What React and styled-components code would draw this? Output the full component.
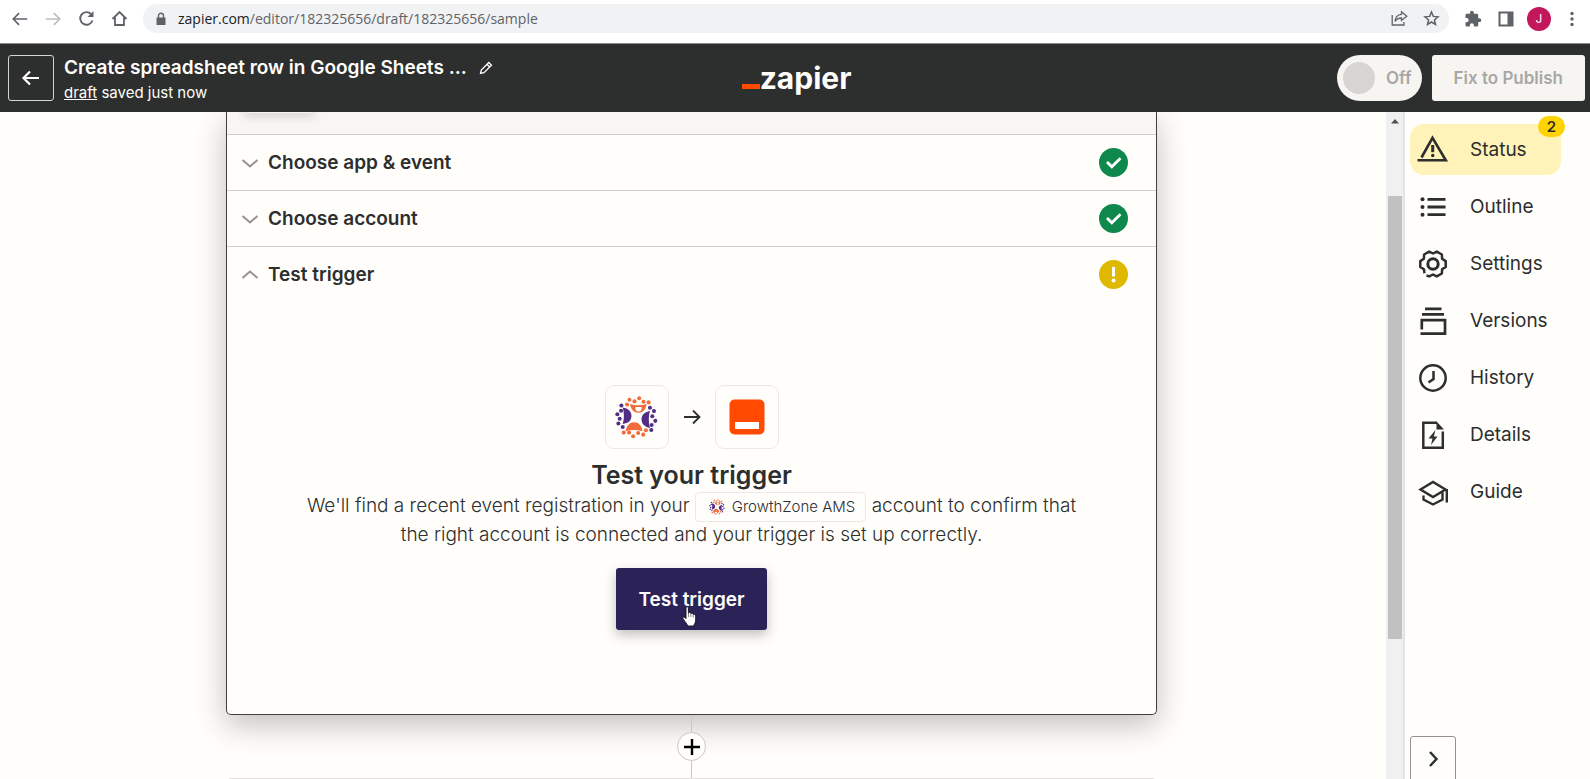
import styled, { createGlobalStyle, css } from "styled-components";

const steps = [
  { label: "Choose app & event", state: "done" },
  { label: "Choose account", state: "done" },
  { label: "Test trigger", state: "warning", open: true },
];

const navItems = [
  { label: "Status", icon: "status", active: true, count: 2 },
  { label: "Outline", icon: "outline" },
  { label: "Settings", icon: "settings" },
  { label: "Versions", icon: "versions" },
  { label: "History", icon: "history" },
  { label: "Details", icon: "details" },
  { label: "Guide", icon: "guide" },
];

const navIcons = {
  status: (
    <>
      <path d="M4.500 23.500 15.500 3.800 28.800 26.300H0.500" strokeWidth="2.600" />
      <path d="M15.700 11v7.200" strokeWidth="3" />
      <circle cx="15.700" cy="21.500" r="1.700" fill="currentColor" stroke="none" />
    </>
  ),
  outline: (
    <>
      <path d="M10.500 8.300h18M10.500 16h18M10.500 23.700h18" strokeWidth="2.800" />
      <g fill="currentColor" stroke="none">
        <circle cx="5.500" cy="8.300" r="2" />
        <circle cx="5.500" cy="16" r="2" />
        <circle cx="5.500" cy="23.700" r="2" />
      </g>
    </>
  ),
  settings: (
    <>
      <path
        d="M7.500 25.300 6.900 21.300 3.300 18.900V13.100L6.900 10.700 7.100 6.500 12.200 3.600 16 5.500 19.800 3.600 24.900 6.500 25.100 10.700 28.700 13.100V18.900L25.100 21.300 24.900 25.500 19.800 28.400 16 26.500 12.200 28.400 9.500 27.500"
        strokeLinejoin="round"
      />
      <circle cx="16" cy="16" r="5.200" strokeWidth="3" />
    </>
  ),
  versions: (
    <path d="M8 3.800h16.500M5 9.300h22M4.800 24.500V15.200H28V28.700H3.500" strokeWidth="2.700" />
  ),
  history: (
    <>
      <circle cx="16" cy="16" r="12.700" />
      <path d="M16.500 9v8L11.500 20.500" />
    </>
  ),
  details: (
    <>
      <path d="M20 3.700H6.300V28.700H25.800V12.500" />
      <path d="M19.500 2.500 27 10.500H19.500Z" fill="currentColor" stroke="none" />
      <path d="M18.500 11 11.500 19.500H15.500L14 26 20.500 17.500H16.800Z" fill="currentColor" stroke="none" />
    </>
  ),
  guide: (
    <path
      d="M3.500 13.500 16 6 28.500 13.500 16 21ZM6.500 19.500V23.500L16 28.500 25.500 23.500V16.500M29.800 13v13.500"
      strokeWidth="2.400"
    />
  ),
};

const NavIcon = ({ name }) => (
  <svg width="32" height="32" viewBox="0 0 32 32" fill="none" stroke="currentColor" strokeWidth="2.500" aria-hidden="true">
    {navIcons[name]}
  </svg>
);

const Arrow = ({ size = 20, flip, weight = 1.8 }) => (
  <svg width={size} height={size} viewBox="0 0 20 20" fill="none" stroke="currentColor" strokeWidth={weight} aria-hidden="true">
    <path d={flip ? "M2 10H17M11 3.500 17.500 10 11 16.500" : "M18 10H3M9 3.500 2.500 10 9 16.500"} />
  </svg>
);

const Chevron = ({ open }) => (
  <svg width="18" height="18" viewBox="0 0 18 18" fill="none" stroke="#95928e" strokeWidth="2" aria-hidden="true">
    <path d={open ? "M1.500 12 9 5.500 16.500 12" : "M1.500 6 9 12.500 16.500 6"} />
  </svg>
);

const StepState = ({ state }) => (
  <svg width="29" height="29" viewBox="0 0 29 29" role="img" aria-label={state}>
    <circle cx="14.500" cy="14.500" r="14.500" fill={state === "done" ? "#0f884e" : "#dfb900"} />
    {state === "done" ? (
      <path d="M8 14 12.800 18.800 21.500 10.300" fill="none" stroke="#fff" strokeWidth="2.800" />
    ) : (
      <>
        <path d="M14.500 7v9.500" stroke="#fff" strokeWidth="3" />
        <circle cx="14.500" cy="20.500" r="2" fill="#fff" />
      </>
    )}
  </svg>
);

const GrowthZoneLogo = ({ size }) => (
  <svg width={size} height={size} viewBox="108 80 128 128" aria-hidden="true">
    <g fill="#512d84">
      <path d="M131 114C149 116 157 128 157 139 157 152 149 162 131 163Q138 139 131 114Z" />
      <path d="M212 125Q205 150 212 175C195 172 187 162 187 150 187 138 195 128 212 125Z" />
      <circle cx="127" cy="108" r="6" />
      <circle cx="126" cy="124" r="6" />
      <circle cx="115" cy="134" r="6" />
      <circle cx="122" cy="148" r="6" />
      <circle cx="118" cy="162" r="6" />
      <circle cx="131" cy="172" r="6" />
      <circle cx="212" cy="115" r="6" />
      <circle cx="224" cy="125" r="6" />
      <circle cx="219" cy="140" r="6" />
      <circle cx="228" cy="154" r="6" />
      <circle cx="217" cy="166" r="6" />
      <circle cx="216" cy="181" r="6" />
    </g>
    <g fill="#f26b3a">
      <path d="M153 104Q178 111 202 104C200 120 190 130 178 130 165 130 155 120 153 104Z" />
      <path d="M140 185C142 168 152 158 165 158 178 158 188 168 190 185Q165 178 140 185Z" />
      <circle cx="144" cy="105" r="6" />
      <circle cx="151" cy="91" r="6" />
      <circle cx="166" cy="96" r="6" />
      <circle cx="180" cy="87" r="6" />
      <circle cx="193" cy="97" r="6" />
      <circle cx="208" cy="99" r="6" />
      <circle cx="134" cy="189" r="6" />
      <circle cx="150" cy="189" r="6" />
      <circle cx="162" cy="200" r="6" />
      <circle cx="177" cy="190" r="6" />
      <circle cx="192" cy="195" r="6" />
      <circle cx="200" cy="182" r="6" />
    </g>
    <path d="M169 113h18v5a9 8 0 0 1-18 0Z" fill="#fff" />
  </svg>
);

const ZapierAppLogo = () => (
  <svg width="36" height="36" viewBox="0 0 36 36" aria-hidden="true">
    <rect x="0.500" y="0.500" width="35" height="35" rx="5" fill="#ff4a00" />
    <path d="M6 23h24v7H6Z" fill="#fff" />
  </svg>
);

const BrowserBar = () => (
  <Toolbar>
    <IconButton aria-label="Back">
      <Arrow size={18} />
    </IconButton>
    <IconButton aria-label="Forward" disabled>
      <Arrow size={18} flip />
    </IconButton>
    <IconButton aria-label="Reload">
      <svg width="17" height="17" viewBox="0 0 17 17" fill="none" stroke="currentColor" strokeWidth="1.900">
        <path d="M14.500 10.500A6.300 6.300 0 1 1 13.300 4.300" />
        <path d="M15.500 1v6H9.500Z" fill="currentColor" stroke="none" />
      </svg>
    </IconButton>
    <IconButton aria-label="Home">
      <svg width="17" height="17" viewBox="0 0 17 17" fill="none" stroke="currentColor" strokeWidth="1.800">
        <path d="M1.500 9 8.500 2 15.500 9M4 7.500V15H13V7.500" />
      </svg>
    </IconButton>
    <AddressBar>
      <svg width="10" height="14" viewBox="0 0 10 14" aria-hidden="true">
        <path d="M0.500 5.500h9V13h-9Z" fill="#5f6368" />
        <path d="M2.500 6V3.700a2.500 2.500 0 0 1 5 0V6" fill="none" stroke="#5f6368" strokeWidth="1.400" />
      </svg>
      <label htmlFor="url">zapier.com</label>
      <input id="url" type="text" defaultValue="/editor/182325656/draft/182325656/sample" />
      <IconButton aria-label="Share">
        <svg width="17" height="17" viewBox="0 0 17 17" fill="none" stroke="currentColor" strokeWidth="1.300">
          <path d="M1.200 5V15H13V12" />
          <path d="M10.500 1.800 15.800 6.200 10.500 10.500V8C7.500 8 5.500 9 4 11.500 4.300 7.500 6.800 4.600 10.500 4.300Z" />
        </svg>
      </IconButton>
      <IconButton aria-label="Bookmark">
        <svg width="17" height="17" viewBox="0 0 17 17" fill="none" stroke="currentColor" strokeWidth="1.500">
          <path d="M8.500 2 10.300 6.400 15 6.800 11.400 9.900 12.500 14.500 8.500 12 4.500 14.500 5.600 9.900 2 6.800 6.700 6.400Z" />
        </svg>
      </IconButton>
    </AddressBar>
    <IconButton aria-label="Extensions">
      <svg width="18" height="18" viewBox="0 0 24 24" fill="currentColor">
        <path d="M20.500 11H19V7c0-1.100-.9-2-2-2h-4V3.500a2.500 2.500 0 0 0-5 0V5H4c-1.100 0-2 .9-2 2v3.800h1.500a2.700 2.700 0 0 1 0 5.400H2V20c0 1.100.9 2 2 2h3.800v-1.500a2.700 2.700 0 0 1 5.400 0V22H17c1.100 0 2-.9 2-2v-4h1.500a2.500 2.500 0 0 0 0-5z" />
      </svg>
    </IconButton>
    <IconButton aria-label="Side panel">
      <svg width="16" height="16" viewBox="0 0 16 16">
        <path d="M0.500 0.500h15v15h-15Z M2.500 2.500v11h7v-11Z" fill="currentColor" fillRule="evenodd" />
      </svg>
    </IconButton>
    <Avatar aria-label="Profile">J</Avatar>
    <IconButton aria-label="Menu">
      <svg width="16" height="16" viewBox="0 0 16 16" fill="currentColor">
        <circle cx="8" cy="2.500" r="1.700" />
        <circle cx="8" cy="8" r="1.700" />
        <circle cx="8" cy="13.500" r="1.700" />
      </svg>
    </IconButton>
  </Toolbar>
);

const EditorHeader = () => (
  <Header>
    <HeaderSide>
      <BackButton aria-label="Back to Zaps">
        <Arrow size={20} weight={2.2} />
      </BackButton>
      <ZapInfo>
        <ZapTitle>
          Create spreadsheet row in Google Sheets ...
          <EditButton aria-label="Rename">
            <svg width="14" height="14" viewBox="0 0 14 14" fill="none" stroke="currentColor" strokeWidth="1.300">
              <path d="M1.500 12.500 2.300 9 9.800 1.500 12.500 4.200 5 11.700ZM8 3.300 10.700 6" />
            </svg>
          </EditButton>
        </ZapTitle>
        <SavedNote>
          <a href="#draft">draft</a> saved just now
        </SavedNote>
      </ZapInfo>
    </HeaderSide>
    <Brand href="#home">
      <i />
      zapier
    </Brand>
    <HeaderSide $end>
      <Toggle>
        <input type="checkbox" role="switch" disabled />
        Off
      </Toggle>
      <PublishButton disabled>Fix to Publish</PublishButton>
    </HeaderSide>
  </Header>
);

const TestTrigger = () => (
  <TestPanel>
    <AppPair>
      <AppTile>
        <GrowthZoneLogo size={43} />
      </AppTile>
      <Arrow size={20} flip />
      <AppTile>
        <ZapierAppLogo />
      </AppTile>
    </AppPair>
    <h2>Test your trigger</h2>
    <p>
      We'll find a recent event registration in your{" "}
      <AppChip>
        <GrowthZoneLogo size={16} />
        GrowthZone AMS
      </AppChip>{" "}
      account to confirm that the right account is connected and your trigger is
      set up correctly.
    </p>
    <TestButton>
      Test trigger
      <Pointer width="15" height="21" viewBox="0 0 15 21" aria-hidden="true">
        <path
          d="M4 1.800C4 0.300 6.400 0.300 6.400 1.800V7C7 6.200 8.800 6.400 8.900 7.600 9.600 7 11.200 7.200 11.300 8.500 12.300 8 13.700 8.400 13.700 10V14C13.700 17 12 18 11.700 20H5.700C5 17.500 3 16 1 12.500 0.500 11.300 2 10.500 3 11.500L4 12.700Z"
          fill="#fff"
          stroke="#111"
          strokeWidth="0.900"
        />
        <path d="M6.500 7v4M8.900 8v3M11.300 9v2.500" stroke="#555" strokeWidth="0.700" />
      </Pointer>
    </TestButton>
  </TestPanel>
);

const App = () => {
  return (
    <Page>
      <GlobalStyle />
      <BrowserBar />
      <EditorHeader />
      <Body>
        <Canvas>
          <StepCard>
            <CardTop>
              <span />
            </CardTop>
            {steps.map((step) => (
              <StepRow key={step.label} aria-expanded={Boolean(step.open)}>
                <Chevron open={step.open} />
                <span>{step.label}</span>
                <StepState state={step.state} />
              </StepRow>
            ))}
            <TestTrigger />
          </StepCard>
          <Connector />
          <AddButton aria-label="Add step">
            <svg width="18" height="18" viewBox="0 0 18 18" stroke="#000" strokeWidth="2.400">
              <path d="M9 1v16M1 9h16" />
            </svg>
          </AddButton>
          <Connector />
          <NextCard />
        </Canvas>
        <ScrollTrack>
          <svg width="10" height="6" viewBox="0 0 10 6" aria-hidden="true">
            <path d="M1 5.500 5 1 9 5.500Z" fill="#505050" />
          </svg>
          <ScrollThumb />
        </ScrollTrack>
        <Sidebar>
          {navItems.map((item) => (
            <NavItem key={item.label} $active={item.active}>
              <NavIcon name={item.icon} />
              {item.label}
              {item.count && <Badge>{item.count}</Badge>}
            </NavItem>
          ))}
          <CollapseButton aria-label="Collapse">
            <svg width="18" height="18" viewBox="0 0 18 18" fill="none" stroke="#2d2e2e" strokeWidth="2.400">
              <path d="M6 2 12.500 9 6 16" />
            </svg>
          </CollapseButton>
        </Sidebar>
      </Body>
    </Page>
  );
};

export default App;

const GlobalStyle = createGlobalStyle`
  * {
    box-sizing: border-box;
  }
  body {
    margin: 0;
    font-family: Inter, "Liberation Sans", sans-serif;
    color: #2d2e2e;
    background: #fffefb;
  }
  button,
  input {
    font: inherit;
    color: inherit;
    margin: 0;
  }
  svg {
    flex: none;
    display: block;
  }
`;

const Page = styled.div`
  height: 100vh;
  display: flex;
  flex-direction: column;
  overflow: hidden;
`;

const Toolbar = styled.div`
  flex: none;
  display: flex;
  align-items: center;
  gap: 1px;
  padding: 4px 2px 10px 4px;
  background: #fff;
  border-bottom: 1px solid #8b8b8b;
`;

const IconButton = styled.button`
  width: 32px;
  height: 29px;
  flex: none;
  display: flex;
  align-items: center;
  justify-content: center;
  padding: 0;
  border: none;
  background: none;
  color: #5f6368;

  &:disabled {
    color: #bcbec0;
  }
`;

const AddressBar = styled.div`
  flex: 1;
  display: flex;
  align-items: center;
  height: 29px;
  margin: 0 7px;
  padding: 0 2px 0 13px;
  border-radius: 15px;
  background: #f0f2f4;
  font-family: "Open Sans", "Noto Sans", sans-serif;
  font-size: 14px;
  color: #5f6368;

  label {
    margin-left: 12px;
    color: #202124;
  }
  input {
    flex: 1;
    padding: 0;
    border: none;
    outline: none;
    background: none;
  }
`;

const Avatar = styled.button`
  width: 24px;
  height: 24px;
  flex: none;
  margin: 0 4px;
  padding: 0;
  border: none;
  border-radius: 50%;
  background: #c2185b;
  color: #fff;
  font-size: 12px;
`;

const Header = styled.header`
  flex: none;
  display: flex;
  align-items: center;
  height: 68px;
  padding: 0 5px 0 8px;
  background: #2d2e2e;
  color: #fffefb;
`;

const HeaderSide = styled.div`
  flex: 1;
  display: flex;
  align-items: center;
  gap: 10px;
  justify-content: ${({ $end }) => ($end ? "flex-end" : "flex-start")};
`;

const BackButton = styled.button`
  width: 46px;
  height: 46px;
  flex: none;
  display: flex;
  align-items: center;
  justify-content: center;
  padding: 0;
  border: 1px solid #d7d5d2;
  border-radius: 3px;
  background: none;
`;

const ZapInfo = styled.div`
  padding-top: 4px;
`;

const ZapTitle = styled.h1`
  display: flex;
  align-items: center;
  margin: 0;
  font-size: 19px;
  font-weight: 600;
  line-height: 26px;
  white-space: nowrap;
`;

const EditButton = styled.button`
  margin-left: 12px;
  padding: 0;
  border: none;
  background: none;
`;

const SavedNote = styled.div`
  font-size: 15px;
  line-height: 24px;

  a {
    color: inherit;
  }
`;

const Brand = styled.a`
  display: flex;
  align-items: baseline;
  color: #fffefb;
  font-size: 30px;
  font-weight: 700;
  line-height: 40px;
  text-decoration: none;

  i {
    width: 18px;
    height: 5px;
    background: #ff4a00;
  }
`;

const disabledControl = css`
  height: 46px;
  background: #f7f5f2;
  color: #a8a7a5;
  font-size: 17px;
  font-weight: 600;
`;

const Toggle = styled.label`
  ${disabledControl}
  display: flex;
  align-items: center;
  gap: 11px;
  padding: 0 10px 0 6px;
  border-radius: 23px;

  input {
    appearance: none;
    width: 32px;
    height: 32px;
    border-radius: 50%;
    background: #d7d5d2;
  }
`;

const PublishButton = styled.button`
  ${disabledControl}
  padding: 0 22px;
  border: none;
  border-radius: 3px;
`;

const Body = styled.div`
  flex: 1;
  min-height: 0;
  display: flex;
`;

const Canvas = styled.main`
  flex: 1;
  display: flex;
  flex-direction: column;
  align-items: center;
  padding: 0 229px 0 226px;
  overflow: hidden;
`;

const StepCard = styled.section`
  flex: none;
  width: 100%;
  border: 1px solid #3f4040;
  border-top: none;
  border-radius: 0 0 5px 5px;
  background: #fffefb;
  box-shadow: 0 10px 30px rgba(45, 46, 46, 0.3);
`;

const CardTop = styled.div`
  height: 22px;
  padding-left: 20px;
  overflow: hidden;
  background: #f7f6f3;

  span {
    display: block;
    width: 64px;
    height: 1px;
    box-shadow: 0 0 10px 3px rgba(45, 46, 46, 0.2);
  }
`;

const StepRow = styled.button`
  width: 100%;
  height: 56px;
  display: flex;
  align-items: center;
  gap: 9px;
  padding: 0 28px 0 14px;
  border: none;
  border-top: 1px solid #d0cfcb;
  background: none;
  font-size: 19px;
  font-weight: 600;
  text-align: left;

  span {
    flex: 1;
  }
`;

const TestPanel = styled.div`
  display: flex;
  flex-direction: column;
  align-items: center;
  padding: 83px 60px 84px;
  text-align: center;

  h2 {
    margin: 10px 0 0;
    font-size: 25px;
    font-weight: 600;
    line-height: 32px;
  }
  p {
    max-width: 800px;
    margin: 0;
    font-size: 19px;
    font-weight: 300;
    line-height: 29px;
    color: #2d2e2e;
  }
`;

const AppPair = styled.div`
  display: flex;
  align-items: center;
  gap: 13px;
`;

const AppTile = styled.div`
  width: 64px;
  height: 64px;
  display: flex;
  align-items: center;
  justify-content: center;
  border: 1px solid #ebe9e5;
  border-radius: 9px;
`;

const AppChip = styled.span`
  display: inline-flex;
  align-items: center;
  gap: 7px;
  height: 30px;
  margin: -4px 0;
  padding: 0 10px 0 13px;
  border: 1px solid #ebe9e5;
  border-radius: 4px;
  vertical-align: middle;
  font-size: 15px;
`;

const TestButton = styled.button`
  position: relative;
  height: 62px;
  margin-top: 19px;
  padding: 0 22px;
  border: none;
  border-radius: 3px;
  background: #2b2358;
  color: #fffefb;
  font-size: 19px;
  font-weight: 600;
  box-shadow: 0 5px 12px rgba(45, 46, 46, 0.3);
`;

const Pointer = styled.svg`
  position: absolute;
  left: 66px;
  top: 38px;
`;

const Connector = styled.div`
  flex: none;
  width: 1px;
  height: 17px;
  background: #c9c7c3;
`;

const AddButton = styled.button`
  width: 29px;
  height: 29px;
  flex: none;
  display: flex;
  align-items: center;
  justify-content: center;
  padding: 0;
  border: 1px solid #c9c7c3;
  border-radius: 50%;
  background: #fffefb;
`;

const NextCard = styled.section`
  flex: none;
  width: 100%;
  height: 80px;
  border: 1px solid #e3e1dd;
  border-radius: 5px;
`;

const ScrollTrack = styled.div`
  width: 17px;
  display: flex;
  flex-direction: column;
  align-items: center;
  gap: 72px;
  padding-top: 6px;
  background: #f0f0f1;
`;

const ScrollThumb = styled.div`
  width: 14px;
  height: 443px;
  background: #c1c1c1;
`;

const Sidebar = styled.nav`
  width: 187px;
  display: flex;
  flex-direction: column;
  gap: 6px;
  padding: 12px 29px 0 5px;
  border-left: 2px solid #e3e3e3;
`;

const NavItem = styled.button`
  position: relative;
  width: 100%;
  height: 51px;
  flex: none;
  display: flex;
  align-items: center;
  gap: 21px;
  padding: 0 0 0 7px;
  border: none;
  border-radius: 14px;
  background: ${({ $active }) => ($active ? "#fff3ba" : "none")};
  font-size: 19px;
`;

const Badge = styled.span`
  position: absolute;
  right: -4px;
  top: -8px;
  width: 27px;
  height: 21px;
  border-radius: 11px;
  background: #ffd300;
  font-size: 15px;
  font-weight: 600;
  line-height: 21px;
`;

const CollapseButton = styled.button`
  width: 46px;
  height: 46px;
  flex: none;
  display: flex;
  align-items: center;
  justify-content: center;
  margin-top: auto;
  margin-bottom: -3px;
  padding: 0;
  border: 1px solid #95928e;
  border-radius: 3px;
  background: none;
`;
